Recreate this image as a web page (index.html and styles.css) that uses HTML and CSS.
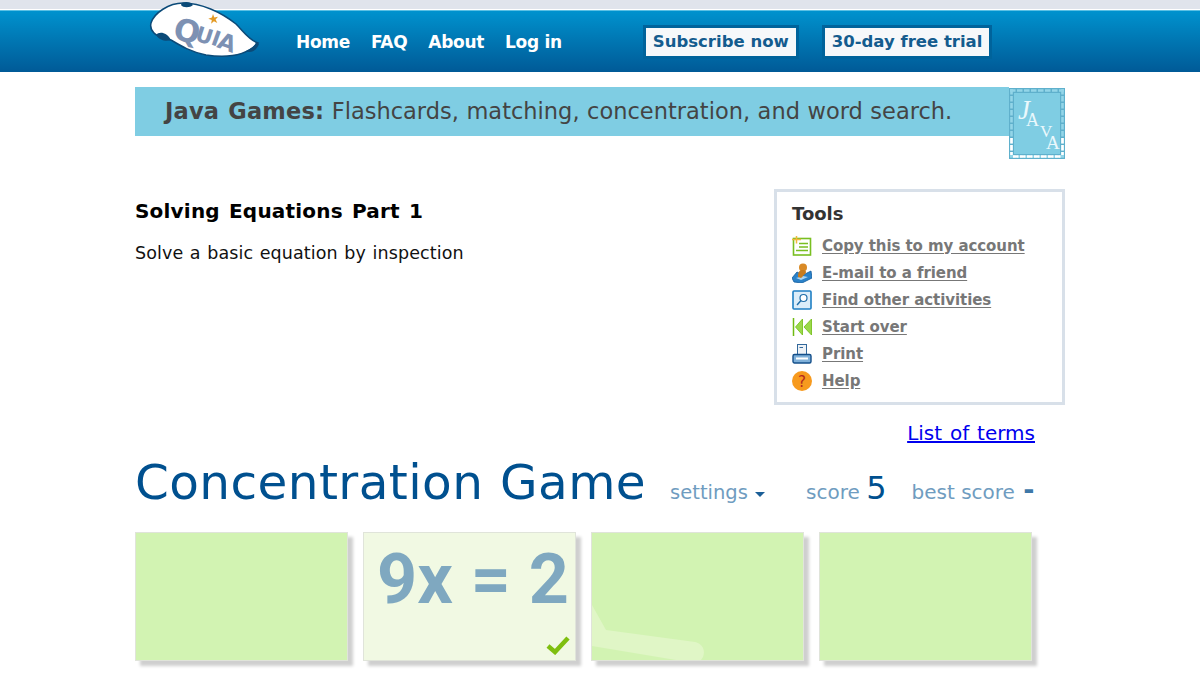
FILE: index.html
```html
<!DOCTYPE html>
<html lang="en">
<head>
<meta charset="utf-8">
<title>Concentration Game</title>
<link rel="stylesheet" href="styles.css">
</head>
<body>
<div class="top-strip"></div>
<header class="site-header">
  <svg class="logo" viewBox="0 0 130 65" width="130" height="65" aria-label="Quia">
    <path d="M10 23C13 13 28 3 42 3C60 3 80 12 95 24C103 32 108 40 117 43C105 56 85 58 65 55C50 52 40 46 30 40C22 38 15 36 13 33C10 30 9 27 10 23Z" fill="#fff" stroke="#0b4a78" stroke-width="1.500"/>
    <path d="M40 5C40 1 50 1 52 5C49 8 42 8 40 5ZM15 35C18 31 26 32 30 40C25 42 18 40 15 35ZM105 51C110 49 114 46 115 42L118 44C116 50 110 54 105 51Z" fill="#0b4a78"/>
    <g class="logo-text">
      <text x="31" y="39" font-size="31" transform="rotate(12 31 39)">Q</text>
      <text x="53" y="40" font-size="21" transform="rotate(18 53 40)">U</text>
      <text x="69" y="44" font-size="21" transform="rotate(20 69 44)">I</text>
      <text x="75" y="47" font-size="23" transform="rotate(20 75 47)">A</text>
    </g>
    <path d="M72 14l1.300 3.500 3.700-.7-2.400 2.800 1.700 3.400-3.400-1.700-2.800 2.400.7-3.700-3.500-1.300 3.600-1.100z" fill="#e39a24"/>
  </svg>
  <nav class="main-nav">
    <a href="#">Home</a>
    <a href="#">FAQ</a>
    <a href="#">About</a>
    <a href="#">Log in</a>
  </nav>
  <div class="cta-group">
    <a class="cta" href="#">Subscribe now</a>
    <a class="cta" href="#">30-day free trial</a>
  </div>
</header>

<main class="page">
  <section class="banner">
    <div class="banner-bar"><b>Java Games:</b> Flashcards, matching, concentration, and word search.</div>
    <svg class="java-tile" viewBox="0 0 56 71" width="56" height="71">
      <rect width="56" height="71" fill="#7fcde3"/>
      <rect x="2.500" y="2.500" width="51" height="66" fill="none" stroke="#5fb0cc" stroke-width="5"/>
      <path d="M1 2.500H55M1 68.500H55M2.500 1V70M53.500 1V70" stroke="#93d5e8" stroke-width="2.600" stroke-dasharray="5.500 1.500" fill="none"/>
      <path d="M2.500 50V67M53.500 50V67M4 68.500H52" stroke="#fff" stroke-width="2.600" stroke-dasharray="5.500 1.500" fill="none"/>
      <g class="java-text">
        <text class="java-j" x="9" y="31" font-size="27">J</text>
        <text x="17" y="38" font-size="18">A</text>
        <text x="31" y="49" font-size="17">V</text>
        <text x="37" y="61" font-size="19">A</text>
      </g>
    </svg>
  </section>

  <section class="intro">
    <div class="intro-text">
      <h2>Solving Equations Part 1</h2>
      <p>Solve a basic equation by inspection</p>
    </div>
    <aside class="tools">
      <h3>Tools</h3>
      <ul>
        <li><svg viewBox="0 0 20 20" width="20" height="20"><rect x="1.500" y="2.500" width="17" height="16.500" fill="#fff" stroke="#79bf21" stroke-width="1.600"/><path d="M7 7.500H16M7 11H16M4 14.500H16" stroke="#79bf21" stroke-width="1.300"/><path d="M4.500 0V7.500M0 3.500H9" stroke="#f1b93b" stroke-width="1.500"/></svg><a href="#">Copy this to my account</a></li>
        <li><svg viewBox="0 0 20 20" width="20" height="20"><path d="M0 15L5 9L11 12L19 8L20 15L10 20L2 19Z" fill="#2b82c9" stroke="#0f5c9e" stroke-width=".8"/><path d="M4 15L11 13L16 14L9 17Z" fill="#a9d4f2"/><circle cx="11" cy="4.500" r="4" fill="#d98a26"/><path d="M6 14C6 10 7 7 10 7C14 7 15 9 13 11C11 12 11 14 9 15Z" fill="#c97c1e"/></svg><a href="#">E-mail to a friend</a></li>
        <li><svg viewBox="0 0 20 20" width="20" height="20"><rect x="1" y="1" width="18" height="18" rx="1" fill="#dcedf9" stroke="#1f7fc4" stroke-width="1.600"/><circle cx="11.500" cy="8" r="3.500" fill="#fff" stroke="#1f6da8" stroke-width="1.200"/><path d="M9 10.500L5 15" stroke="#1f6da8" stroke-width="1.400"/></svg><a href="#">Find other activities</a></li>
        <li><svg viewBox="0 0 20 20" width="20" height="20"><path d="M1.500 1V19" stroke="#6fbb12" stroke-width="1.500"/><path d="M10.500 2V18L3.500 10Z" fill="#9ad94a" stroke="#6fbb12" stroke-width=".8"/><path d="M19.500 2V18L12 10Z" fill="#9ad94a" stroke="#6fbb12" stroke-width=".8"/></svg><a href="#">Start over</a></li>
        <li><svg viewBox="0 0 20 20" width="20" height="20"><rect x="5.500" y="0.500" width="9" height="10" fill="#eef2f6" stroke="#33689b"/><path d="M7.500 3.500H11" stroke="#33689b"/><rect x="1" y="10.500" width="18" height="8.500" rx="1.500" fill="#7fb0d9" stroke="#144f8a" stroke-width="1.400"/><rect x="4" y="13.500" width="12" height="2" fill="#fff"/></svg><a href="#">Print</a></li>
        <li><svg viewBox="0 0 20 20" width="20" height="20"><circle cx="10" cy="10" r="10" fill="#f79a1e"/><text class="help-mark" x="10" y="15.500" font-size="15">?</text></svg><a href="#">Help</a></li>
      </ul>
    </aside>
  </section>

  <div class="terms-row"><a href="#">List of terms</a></div>

  <section class="game-head">
    <h1>Concentration Game</h1>
    <span class="settings">settings <i class="caret"></i></span>
    <span class="stat score">score <b>5</b></span>
    <span class="stat best">best score <b class="dash">-</b></span>
  </section>

  <section class="cards">
    <div class="card"></div>
    <div class="card matched">
      <span class="term">9x = 2</span>
      <svg class="check" viewBox="0 0 24 20" width="24" height="20"><path d="M2 11L9 17L22 3" fill="none" stroke="#7fbf0f" stroke-width="4.500"/></svg>
    </div>
    <div class="card">
      <svg class="glare" viewBox="0 0 211 127" width="211" height="127"><path d="M0 72L14 97L103 109C113 111 114 122 109 127H84L0 113Z" fill="#e0f6c6"/></svg>
    </div>
    <div class="card"></div>
  </section>
</main>
</body>
</html>
```
FILE: styles.css
```css
* { box-sizing: border-box; }
html, body { margin: 0; padding: 0; height: 675px; overflow: hidden; background: #fff; }
body { font-family: "DejaVu Sans", Verdana, sans-serif; color: #000; }

.top-strip { height: 9px; background: #e0e4ec; }

.site-header {
  position: relative;
  height: 63px;
  display: flex;
  align-items: center;
  padding: 1px 0 0 296px;
  border-top: 1px solid #fff;
  background: linear-gradient(#0093cf, #0079b5 45%, #005a97);
  box-shadow: inset 0 1px 0 #5cc0e4;
}
.logo { position: absolute; left: 141px; top: -10px; }
.logo-text text { font-family: "DejaVu Sans", sans-serif; font-weight: 700; fill: #7d91b3; }

.main-nav { display: flex; gap: 21px; }
.main-nav a { color: #fff; font-size: 17px; font-weight: 700; text-decoration: none; letter-spacing: -.3px; }

.cta-group { display: flex; gap: 23px; margin-left: 81px; }
.cta {
  display: block;
  height: 34px;
  padding: 0 7px;
  line-height: 28px;
  font-size: 16.500px;
  font-weight: 700;
  color: #145c8e;
  background: #f6f8fa;
  border: 3px solid #00639b;
  text-decoration: none;
  white-space: nowrap;
}

.page { width: 930px; margin-left: 135px; padding-top: 15px; }

.banner { display: flex; align-items: flex-start; }
.banner-bar {
  flex: 1;
  height: 49px;
  padding-left: 30px;
  line-height: 49px;
  font-size: 22.500px;
  word-spacing: .4px;
  color: #444;
  background: #7fcde3;
  white-space: nowrap;
}
.banner-bar b { color: #444; letter-spacing: .2px; word-spacing: 1px; }
.java-tile { display: block; flex: none; margin-top: 1px; }
.java-text text { font-family: "Liberation Serif", serif; fill: #eaf8fc; }
.java-text .java-j { font-style: italic; }

.intro { display: flex; justify-content: space-between; margin-top: 30px; }
.intro-text { padding-top: 9px; }
.intro-text h2 { margin: 0; font-size: 20px; line-height: 26px; font-weight: 700; letter-spacing: .2px; word-spacing: 2px; }
.intro-text p { margin: 17px 0 0; font-size: 17.500px; line-height: 24px; color: #111; letter-spacing: .1px; word-spacing: .9px; }

.tools {
  width: 291px;
  height: 216px;
  padding: 11px 15px 0;
  border: 3px solid #d8e0e9;
}
.tools h3 { margin: 0 0 7px; font-size: 18px; line-height: 22px; color: #333; font-weight: 700; }
.tools ul { margin: 0; padding: 0; list-style: none; }
.tools li { display: flex; align-items: center; gap: 10px; height: 27px; }
.tools li svg { flex: none; display: block; }
.tools li a { color: #777; font-size: 15px; font-weight: 700; letter-spacing: -.07px; text-underline-offset: 2px; }
.help-mark { font-family: "DejaVu Sans", sans-serif; fill: #b3261e; text-anchor: middle; }

.terms-row { width: 900px; margin-top: 14px; text-align: right; font-size: 20px; line-height: 28px; word-spacing: 1.500px; }
.terms-row a { color: #0000ee; }

.game-head { display: flex; align-items: baseline; height: 58px; margin-top: 6px; color: #6f9cc0; }
.game-head h1 { margin: 0; font-size: 48.500px; line-height: 58px; font-weight: 400; color: #00508f; white-space: nowrap; letter-spacing: .4px; word-spacing: 1px; }
.settings { margin-left: 24px; font-size: 19.500px; }
.caret { display: inline-block; margin-left: 1px; border: 5px solid transparent; border-top-color: #1b5f97; border-bottom: 0; vertical-align: 2px; }
.stat { font-size: 20px; white-space: nowrap; }
.stat b { font-weight: 400; color: #00508f; font-size: 32px; }
.stat .dash { font-size: 27px; font-weight: 700; color: #3f78a8; margin-left: 2px; }
.score { margin-left: 41px; }
.best { margin-left: 25px; }

.cards { display: flex; gap: 15px; margin-top: 21px; }
.card {
  position: relative;
  width: 213px;
  height: 129px;
  background: #d2f3b2;
  border: 1px solid #e0e4da;
  box-shadow: 5px 5px 3px #cfcfcf;
  overflow: hidden;
}
.card.matched { background: #f1f9e3; }
.term { position: absolute; left: 13px; top: 4px; font-family: Roboto, sans-serif; font-size: 70px; line-height: 84px; font-weight: 700; color: #7fa8c0; white-space: nowrap; word-spacing: .5px; }
.check { position: absolute; right: 5px; bottom: 5px; }
.glare { position: absolute; left: 0; top: 0; display: block; }
```
